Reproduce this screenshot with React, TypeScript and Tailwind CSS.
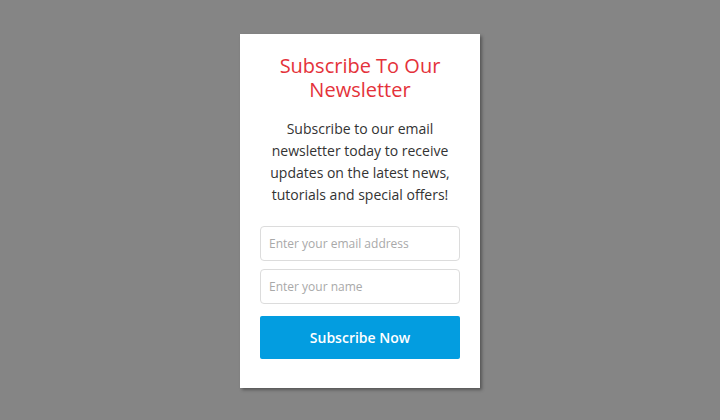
import React from "react";

const font = { fontFamily: '"Open Sans", "Noto Sans", sans-serif' };

export default function App() {
  return (
    <div
      className="flex h-[420px] w-[720px] items-start justify-center bg-[#858585] pt-[34px]"
      style={font}
    >
      <div className="w-[240px] bg-white px-5 pt-[20px] pb-[29px] text-center shadow-[2px_2px_3px_rgba(0,0,0,0.35)]">
        <h2 className="text-[20px] leading-[24px] text-[#e4323a]">
          Subscribe To Our Newsletter
        </h2>
        <p className="mt-[16px] text-[14px] leading-[22px] text-[#333]">
          Subscribe to our email newsletter today to receive updates on the
          latest news, tutorials and special offers!
        </p>
        <form className="mt-[20px] flex flex-col gap-2" onSubmit={(e) => e.preventDefault()}>
          <input
            type="email"
            placeholder="Enter your email address"
            className="h-[35px] w-full rounded-[4px] border border-[#dcdcdc] px-2 text-[12px] text-[#333] placeholder:text-[#a9a9a9] focus:outline-none"
          />
          <input
            type="text"
            placeholder="Enter your name"
            className="h-[35px] w-full rounded-[4px] border border-[#dcdcdc] px-2 text-[12px] text-[#333] placeholder:text-[#a9a9a9] focus:outline-none"
          />
          <button
            type="submit"
            className="mt-1 h-[43px] w-full rounded-[2px] bg-[#039de0] text-[14px] font-semibold text-white"
          >
            Subscribe Now
          </button>
        </form>
      </div>
    </div>
  );
}
